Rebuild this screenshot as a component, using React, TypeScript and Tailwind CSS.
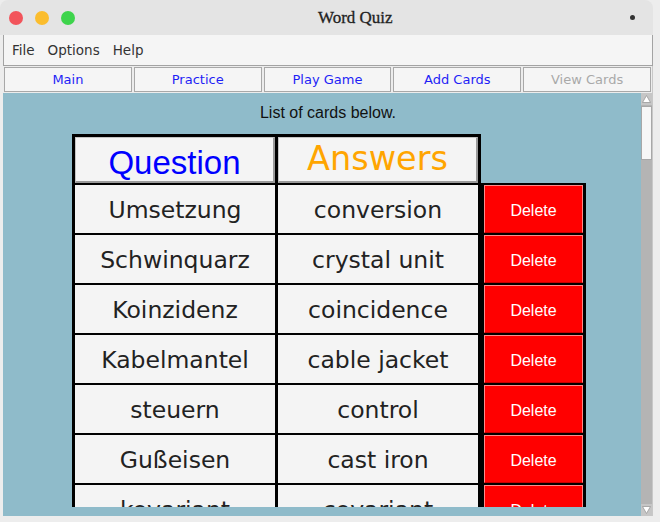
import React from "react";

const rows: [string, string][] = [
  ["Umsetzung", "conversion"],
  ["Schwinquarz", "crystal unit"],
  ["Koinzidenz", "coincidence"],
  ["Kabelmantel", "cable jacket"],
  ["steuern", "control"],
  ["Gußeisen", "cast iron"],
  ["kovariant", "covariant"],
];

const tabs = ["Main", "Practice", "Play Game", "Add Cards", "View Cards"];

export default function App() {
  return (
    <div className="w-[660px] h-[522px] bg-[#ededed] overflow-hidden">
      <div className="w-[653px] h-[516px] flex flex-col">
        {/* Title bar */}
        <div className="h-[35px] bg-[#e4e4e4] rounded-t-[8px] flex items-center pl-[9px]">
          <div className="flex gap-[12px]">
            <div className="w-[14px] h-[14px] rounded-full bg-[#f2545b]" />
            <div className="w-[14px] h-[14px] rounded-full bg-[#fbbd2e]" />
            <div className="w-[14px] h-[14px] rounded-full bg-[#3ed44c]" />
          </div>
          <div className="ml-[243px] text-[17px] text-[#222] leading-none [font-family:'Liberation_Serif',serif] [-webkit-text-stroke:0.3px_#222]">
            Word Quiz
          </div>
          <div className="ml-auto mr-[18px] w-[5px] h-[5px] rounded-full bg-[#333]" />
        </div>
        {/* Body */}
        <div className="flex-1 flex flex-col ml-[3px]">
          <div className="h-[31px] shrink-0 bg-[#f5f5f5] border-l border-r border-b border-[#a3a3a3] flex items-center pl-[8px] gap-[13px] text-[13.5px] text-[#333] [font-family:'DejaVu_Sans',sans-serif]">
            <span>File</span>
            <span>Options</span>
            <span>Help</span>
          </div>
          <div className="h-[27px] shrink-0 bg-[#ececec] flex gap-[2px] p-[1px] border-r border-[#c8c8c8]">
            {tabs.map((t, i) => (
              <div
                key={t}
                className={
                  "w-[128px] h-[25px] bg-[#f5f5f5] border border-[#a8a8a8] flex items-center justify-center text-[13px] [font-family:'DejaVu_Sans',sans-serif] " +
                  (i === 4 ? "text-[#a9a9a9]" : "text-[#1f1ff5]")
                }
              >
                {t}
              </div>
            ))}
          </div>
          <div className="flex-1 flex">
            <div className="w-[638px] bg-[#8fbbca] flex flex-col">
              <div className="h-[414px] overflow-hidden">
                <div className="pt-[11px] pl-[12px] text-center text-[16px] leading-[18px] text-[#111] [font-family:'Liberation_Sans',sans-serif]">
                  List of cards below.
                </div>
                <div className="flex items-start ml-[69px] mt-[12px]">
                  <div className="bg-black p-[3px] grid grid-cols-[200px_200px] gap-x-[3px] gap-y-[2px]">
                    <div className="h-[46px] bg-[#f4f4f4] border border-[#c4c4c4] border-b-[2px] border-r-[2px] border-b-[#9a9a9a] border-r-[#9a9a9a] flex items-center justify-center pt-[6px] text-[33px] text-[#0000ff] [font-family:'Liberation_Sans',sans-serif]">
                      Question
                    </div>
                    <div className="h-[46px] bg-[#f4f4f4] border border-[#c4c4c4] border-b-[2px] border-r-[2px] border-b-[#9a9a9a] border-r-[#9a9a9a] flex items-center justify-center text-[33.5px] text-[#ffa500] [font-family:'DejaVu_Sans',sans-serif]">
                      Answers
                    </div>
                    {rows.map(([q, a]) => (
                      <React.Fragment key={q}>
                        <div className="h-[48px] bg-[#f4f4f4] flex items-center justify-center pt-[4px] text-[23.5px] text-[#222] [font-family:'DejaVu_Sans',sans-serif]">
                          {q}
                        </div>
                        <div className="h-[48px] bg-[#f4f4f4] flex items-center justify-center pt-[4px] text-[23.5px] text-[#222] [font-family:'DejaVu_Sans',sans-serif]">
                          {a}
                        </div>
                      </React.Fragment>
                    ))}
                  </div>
                  <div className="bg-black mt-[49px] px-[3px] pt-[2px] pb-[3px] flex flex-col gap-[2px]">
                    {rows.map(([q]) => (
                      <div
                        key={q}
                        className="w-[99px] h-[48px] bg-[#ff0000] border border-[#ff8a8a] border-b-[#c80000] flex items-center justify-center pt-[3px] text-[16px] text-white [font-family:'Liberation_Sans',sans-serif]"
                      >
                        Delete
                      </div>
                    ))}
                  </div>
                </div>
              </div>
            </div>
            {/* Scrollbar */}
            <div className="w-[11px] bg-[#b4b4b4] flex flex-col">
              <div className="h-[12px] bg-[#c6c6c6] flex items-center justify-center">
                <svg width="9" height="8" viewBox="0 0 9 8">
                  <path d="M4.5 0.5 L8.5 7.5 L0.5 7.5 Z" fill="#fff" stroke="#999" strokeWidth="0.8" />
                </svg>
              </div>
              <div className="h-[54px] mt-[1px] bg-[#f7f7f7] border border-[#a8a8a8]" />
              <div className="flex-1" />
              <div className="h-[12px] bg-[#c6c6c6] flex items-center justify-center">
                <svg width="9" height="8" viewBox="0 0 9 8">
                  <path d="M0.5 0.5 L8.5 0.5 L4.5 7.5 Z" fill="#fff" stroke="#999" strokeWidth="0.8" />
                </svg>
              </div>
            </div>
            <div className="w-[1px] bg-[#c8c8c8]" />
          </div>
        </div>
      </div>
    </div>
  );
}
